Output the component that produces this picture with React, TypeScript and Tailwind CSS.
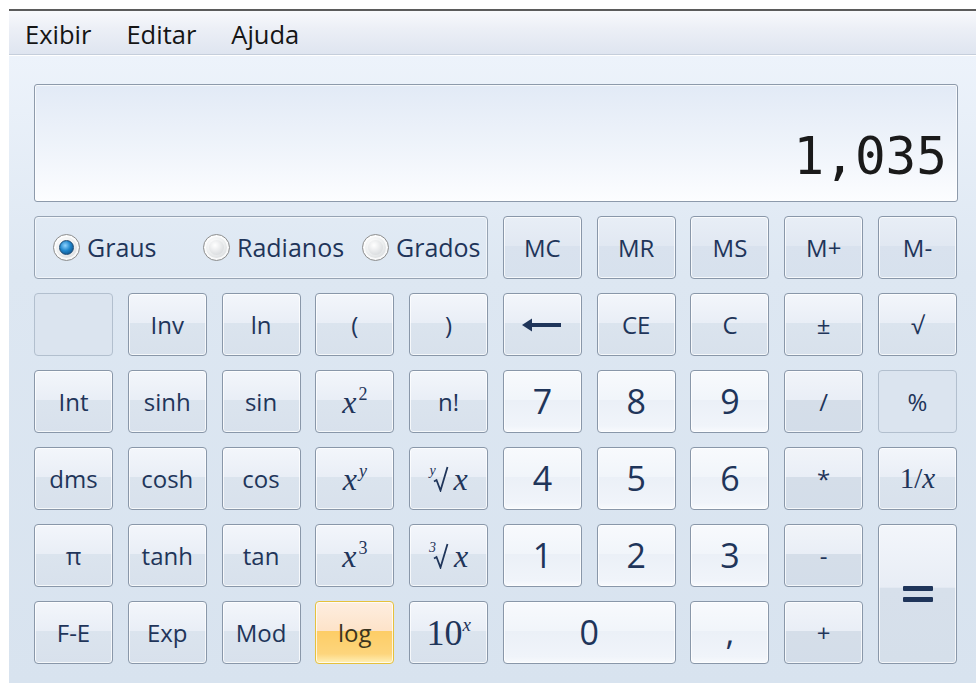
import type { ReactNode } from "react";

type Variant = "fn" | "mem" | "num" | "op" | "flat" | "hot" | "eq";

const variantClass: Record<Variant, string> = {
  fn: "border-[#8997a9] bg-[linear-gradient(to_bottom,#f3f6fb_0%,#e9eef6_47%,#dbe4ee_48%,#d8e1ec_100%)]",
  mem: "border-[#8997a9] bg-[linear-gradient(to_bottom,#e8eef6_0%,#e1e8f2_47%,#d9e2ee_48%,#d7e1ed_100%)]",
  num: "border-[#8997a9] bg-[linear-gradient(to_bottom,#f8fafd_0%,#f1f5fa_47%,#ebf0f7_48%,#f0f4fa_90%,#f8fafd_100%)]",
  op: "border-[#8997a9] bg-[linear-gradient(to_bottom,#f1f4f9_0%,#e9eef6_47%,#d5dee9_48%,#d3dde9_100%)]",
  flat: "border-[#b2bfce] bg-[#dbe4ef] shadow-none",
  hot: "border-[#e6c13c] bg-[linear-gradient(to_bottom,#feeee0_0%,#fde3c9_47%,#fdcd66_48%,#fdd57c_85%,#fff0b8_100%)]",
  eq: "border-[#8997a9] bg-[linear-gradient(to_bottom,#f3f6fb_0%,#e8edf5_45%,#d7e0eb_46%,#d5dfea_100%)]",
};

function Key({
  children,
  variant = "fn",
  className = "",
}: {
  children?: ReactNode;
  variant?: Variant;
  className?: string;
}) {
  return (
    <button
      className={`flex items-center justify-center rounded-[4px] border text-[#1f355a] shadow-[inset_0_0_0_1px_rgba(255,255,255,0.75)] ${variantClass[variant]} ${className}`}
    >
      {children}
    </button>
  );
}

// rótulos em fonte serifada itálica, como x², xʸ, ∛x
function X({ sup, pre }: { sup?: string; pre?: ReactNode }) {
  return (
    <span className="flex items-baseline font-['Liberation_Serif',serif] text-[32px] leading-none">
      {pre}
      <i>x</i>
      {sup && <sup className="ml-[2px] text-[18px] not-italic -top-[13px]">{sup === "y" ? <i>y</i> : sup}</sup>}
    </span>
  );
}

// radical desenhado, com o índice pequeno encaixado no canto
function Root({ index }: { index: string }) {
  return (
    <span className="mr-[5px] flex items-start self-center">
      <span className="mt-[-2px] text-[14px] italic leading-none">{index}</span>
      <svg width="16" height="26" viewBox="0 0 16 26" className="ml-[-3px]">
        <path d="M1 15.5L3.5 14L7.5 24.5L14.5 1" fill="none" stroke="#1f355a" strokeWidth="1.8" />
      </svg>
    </span>
  );
}

function Radio({ checked, label, width }: { checked?: boolean; label: string; width: string }) {
  return (
    <label className={`flex items-center gap-[7px] ${width}`}>
      <span className="flex h-[27px] w-[27px] items-center justify-center rounded-full border border-[#8e8f8f] bg-[radial-gradient(circle_at_40%_35%,#ffffff_0%,#eceeef_45%,#c9cccf_100%)] shadow-[inset_0_0_0_2px_rgba(255,255,255,0.8)]">
        {checked ? (
          <span className="h-[15px] w-[15px] rounded-full border border-[#1d4a73] bg-[radial-gradient(circle_at_40%_35%,#8fd3ff_0%,#1f86cc_45%,#0b3f6f_100%)]" />
        ) : (
          <span className="h-[15px] w-[15px] rounded-full bg-[radial-gradient(circle_at_40%_35%,#ffffff_0%,#e2e4e6_60%,#cfd2d5_100%)]" />
        )}
      </span>
      <span>{label}</span>
    </label>
  );
}

export default function App() {
  const label = "text-[24px]";
  const digit = "text-[34px]";

  return (
    <div className="h-[683px] w-[976px] overflow-hidden bg-white pl-[9px] pt-[9px] font-['Open_Sans',sans-serif]">
      <div className="flex h-full flex-col border-t-2 border-[#5b5b5b]">
        {/* barra de menus */}
        <div className="flex h-[44px] items-center gap-[35px] border-b border-[#c5cedb] bg-[linear-gradient(to_bottom,#f8f9fc_0%,#eceff6_40%,#dfe5f0_100%)] pl-[16px] pt-[3px] text-[25.5px] text-[#151515]">
          <span>Exibir</span>
          <span>Editar</span>
          <span>Ajuda</span>
        </div>

        <div className="flex-1 border-t border-white bg-[linear-gradient(to_bottom,#edf3fb_0%,#dde7f2_35%,#d8e3ef_100%)] pl-[25px] pr-[18px] pt-[28px]">
          {/* visor */}
          <div className="flex h-[118px] items-end justify-end rounded-[3px] border border-[#8d9aab] bg-[linear-gradient(to_bottom,#e2eaf6_0%,#eef3fa_50%,#fcfdff_100%)] pb-[19px] pr-[10px] shadow-[inset_0_0_0_1px_rgba(255,255,255,0.7)]">
            <span className="font-['DejaVu_Sans_Mono',monospace] text-[51px] leading-none text-[#1a1a1a]">1,035</span>
          </div>

          <div className="mt-[14px] grid w-[923px] grid-cols-10 grid-rows-[repeat(6,63px)] gap-x-[14.8px] gap-y-[14px] text-[#1f355a]">
            <div className="col-span-5 flex items-center rounded-[4px] border border-[#96a3b3] pl-[18px] text-[25px] shadow-[inset_0_0_0_1px_rgba(255,255,255,0.6)]">
              <Radio checked label="Graus" width="w-[150px]" />
              <Radio label="Radianos" width="w-[159px]" />
              <Radio label="Grados" width="flex-1" />
            </div>
            <Key variant="mem" className={label}>MC</Key>
            <Key variant="mem" className={label}>MR</Key>
            <Key variant="mem" className={label}>MS</Key>
            <Key variant="mem" className={label}>M+</Key>
            <Key variant="mem" className={label}>M-</Key>

            <Key variant="flat" />
            <Key className={label}>Inv</Key>
            <Key className={label}>ln</Key>
            <Key className={label}>(</Key>
            <Key className={label}>)</Key>
            <Key>
              <svg width="42" height="16" viewBox="0 0 42 16">
                <path d="M40 8H8" stroke="#1f355a" strokeWidth="4" />
                <path d="M1 8L11 1.5V14.5Z" fill="#1f355a" />
              </svg>
            </Key>
            <Key className={label}>CE</Key>
            <Key className={label}>C</Key>
            <Key className={label}>±</Key>
            <Key className={label}>√</Key>

            <Key className={label}>Int</Key>
            <Key className={label}>sinh</Key>
            <Key className={label}>sin</Key>
            <Key><X sup="2" /></Key>
            <Key className={label}>n!</Key>
            <Key variant="num" className={digit}>7</Key>
            <Key variant="num" className={digit}>8</Key>
            <Key variant="num" className={digit}>9</Key>
            <Key variant="op" className={label}>/</Key>
            <Key variant="flat" className={label}>%</Key>

            <Key className={label}>dms</Key>
            <Key className={label}>cosh</Key>
            <Key className={label}>cos</Key>
            <Key><X sup="y" /></Key>
            <Key><X pre={<Root index="y" />} /></Key>
            <Key variant="num" className={digit}>4</Key>
            <Key variant="num" className={digit}>5</Key>
            <Key variant="num" className={digit}>6</Key>
            <Key variant="op" className={label}>*</Key>
            <Key>
              <span className="font-['Liberation_Serif',serif] text-[29px] leading-none">
                1/<i>x</i>
              </span>
            </Key>

            <Key className={label}>π</Key>
            <Key className={label}>tanh</Key>
            <Key className={label}>tan</Key>
            <Key><X sup="3" /></Key>
            <Key><X pre={<Root index="3" />} /></Key>
            <Key variant="num" className={digit}>1</Key>
            <Key variant="num" className={digit}>2</Key>
            <Key variant="num" className={digit}>3</Key>
            <Key variant="op" className={label}>-</Key>
            <Key variant="eq" className="row-span-2 flex-col gap-[6px]">
              <span className="h-[5px] w-[30px] rounded-[1px] bg-[#1f355a]" />
              <span className="h-[5px] w-[30px] rounded-[1px] bg-[#1f355a]" />
            </Key>

            <Key className={label}>F-E</Key>
            <Key className={label}>Exp</Key>
            <Key className={label}>Mod</Key>
            <Key variant="hot" className={`${label} text-[#3b3520]`}>log</Key>
            <Key>
              <span className="font-['Liberation_Serif',serif] text-[36px] leading-none">
                10<sup className="text-[19px] -top-[14px]"><i>x</i></sup>
              </span>
            </Key>
            <Key variant="num" className={`col-span-2 ${digit}`}>0</Key>
            <Key variant="num" className={digit}>,</Key>
            <Key variant="op" className={label}>+</Key>
          </div>
        </div>
      </div>
    </div>
  );
}
